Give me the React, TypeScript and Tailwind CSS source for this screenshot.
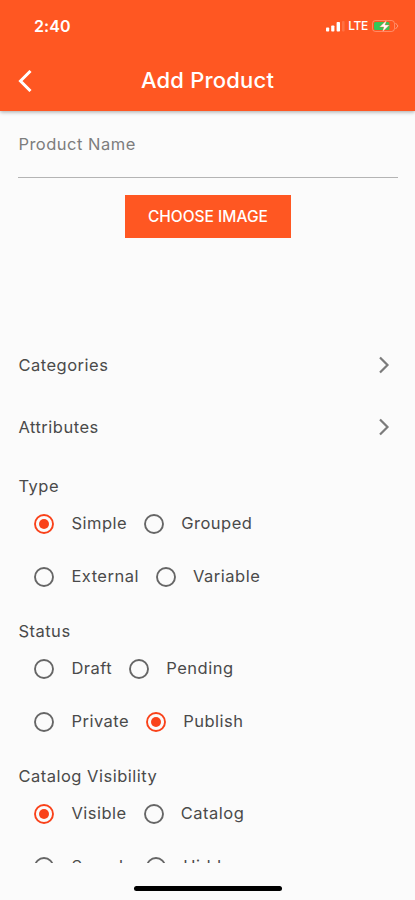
import { useState } from "react"

const sections = [
  {
    title: "Type",
    initial: "Simple",
    rows: [
      ["Simple", "Grouped"],
      ["External", "Variable"],
    ],
  },
  {
    title: "Status",
    initial: "Publish",
    rows: [
      ["Draft", "Pending"],
      ["Private", "Publish"],
    ],
  },
  {
    title: "Catalog Visibility",
    initial: "Visible",
    rows: [
      ["Visible", "Catalog"],
      ["Search", "Hidden"],
    ],
  },
]

function StatusBar() {
  return (
    <div className="flex h-[52px] items-center justify-between pr-[15px] pl-[34px]">
      <span className="text-[16px] font-semibold tracking-[0.1px]">2:40</span>
      <div className="flex items-center">
        <svg width="20" height="12" viewBox="0 0 20 12" fill="white">
          <rect x="0" y="7.5" width="3.2" height="4" rx="0.8" />
          <rect x="5.2" y="5.5" width="3.2" height="6" rx="0.8" />
          <rect x="10.6" y="2" width="3.4" height="9.5" rx="0.8" />
          <rect x="16" y="1" width="2.6" height="10.5" rx="0.8" opacity="0.15" />
        </svg>
        <span className="ml-[2px] text-[12px] font-medium tracking-[-0.3px]">LTE</span>
        <svg className="ml-[4px]" width="28" height="14" viewBox="0 0 28 14">
          <rect x="0.5" y="1.5" width="22" height="11" rx="3" fill="none" stroke="white" strokeOpacity="0.3" />
          <rect x="2" y="3" width="15.5" height="8" rx="1.5" fill="#34c759" />
          <path d="M23.5 4 L26 7 L23.5 10" fill="none" stroke="white" strokeOpacity="0.4" />
          <path d="M15 0.8 L7.5 8 H11.8 L10.2 13.2 L17.5 5.9 H13 Z" fill="white" stroke="#ff5722" strokeWidth="0.4" />
        </svg>
      </div>
    </div>
  )
}

function Radio({ label, checked, onSelect }: { label: string; checked: boolean; onSelect: () => void }) {
  return (
    <button role="radio" aria-checked={checked} onClick={onSelect} className="flex items-center">
      <svg width="20" height="20" viewBox="0 0 20 20" className={checked ? "text-[#f9421a]" : "text-[#666]"}>
        <circle cx="10" cy="10" r="9" fill="none" stroke="currentColor" strokeWidth="1.9" />
        {checked && <circle cx="10" cy="10" r="5" fill="currentColor" />}
      </svg>
      <span className="ml-[17px]">{label}</span>
    </button>
  )
}

function RadioSection({ title, initial, rows }: (typeof sections)[number]) {
  const [value, setValue] = useState(initial)

  return (
    <section className="h-[145px] shrink-0" role="radiogroup" aria-label={title}>
      <h2 className="h-[27px] leading-[32px]">{title}</h2>
      {rows.map((row) => (
        <div key={row[0]} className="flex h-[53px] items-center gap-[17px] pl-4">
          {row.map((label) => (
            <Radio key={label} label={label} checked={value === label} onSelect={() => setValue(label)} />
          ))}
        </div>
      ))}
    </section>
  )
}

function LinkRow({ label }: { label: string }) {
  return (
    <button className="flex h-[62px] w-full shrink-0 items-center justify-between pr-2">
      <span>{label}</span>
      <svg width="12" height="18" viewBox="0 0 12 18" fill="none" stroke="#7b7b7b" strokeWidth="2.2">
        <path d="M2 1.5 L9.5 9 L2 16.5" />
      </svg>
    </button>
  )
}

export default function App() {
  return (
    <div className="flex h-[900px] w-[415px] flex-col overflow-hidden bg-[#fbfbfb] font-[Inter,sans-serif] text-[16.5px] tracking-[0.5px] text-[#4a4a4a]">
      <header className="z-10 h-[111px] shrink-0 bg-[#ff5722] text-white shadow-[0_1px_4px_rgba(0,0,0,0.35)]">
        <StatusBar />
        <div className="grid h-[57px] grid-cols-[60px_1fr_60px] items-center">
          <button aria-label="Back" className="pl-[18px]">
            <svg width="14" height="22" viewBox="0 0 14 22" fill="none" stroke="white" strokeWidth="3">
              <path d="M12.5 1 L2.5 11 L12.5 21" />
            </svg>
          </button>
          <h1 className="text-center text-[22px] font-medium tracking-[0.2px]">Add Product</h1>
        </div>
      </header>

      <main className="flex h-[752px] shrink-0 flex-col overflow-hidden pr-[17px] pl-[18.4px]">
        <input
          placeholder="Product Name"
          className="h-[67px] w-[379.5px] shrink-0 border-b border-[#b4b4b4] tracking-[0.5px] outline-none placeholder:text-[#7d7d7d]"
        />
        <button className="mt-[16.5px] ml-[106.5px] h-[43.5px] w-[166px] shrink-0 bg-[#ff5722] text-[15.5px] font-medium tracking-[0] text-white">
          CHOOSE IMAGE
        </button>
        <div className="mt-[96px]">
          <LinkRow label="Categories" />
          <LinkRow label="Attributes" />
        </div>
        <div className="mt-[12px]">
          {sections.map((section) => (
            <RadioSection key={section.title} {...section} />
          ))}
        </div>
      </main>

      <footer className="flex h-[37px] shrink-0 justify-center pt-[23px]">
        <div className="h-[5px] w-[148px] rounded-full bg-black" />
      </footer>
    </div>
  )
}
